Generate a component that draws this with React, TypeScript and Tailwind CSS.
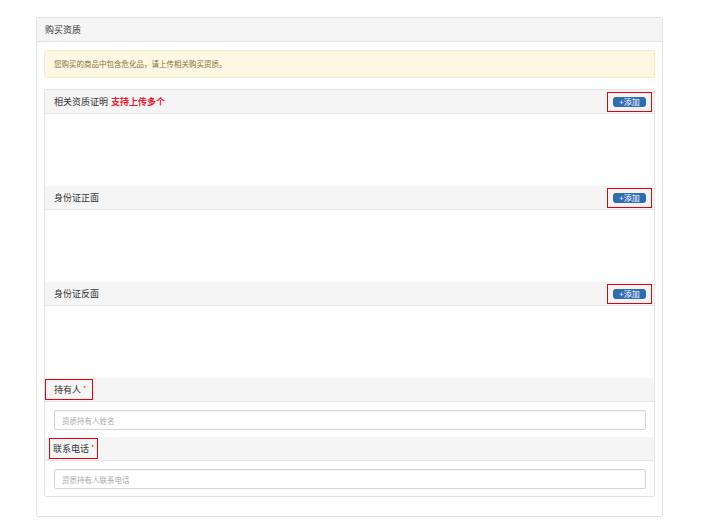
import React from 'react';

const font = { fontFamily: '"Microsoft YaHei", "Noto Sans CJK SC", "Noto Sans", sans-serif' };

function AddButton() {
  return (
    <span className="border border-solid border-red-600 px-[5px] py-[4px] mr-[2px] flex items-center">
      <button className="bg-[#2f6db5] text-white text-[8px] leading-none h-[10px] w-[33px] rounded-[3px] flex items-center justify-center">
        +添加
      </button>
    </span>
  );
}

function UploadSection({ title, extra }: { title: string; extra?: string }) {
  return (
    <div className="flex flex-col">
      <div className="h-[24px] bg-[#f5f5f5] border-b border-[#e6e6e6] flex items-center justify-between pl-[9px]">
        <span className="text-[9px] text-[#333]">
          {title}
          {extra && <span className="text-[#f0142d] font-bold ml-[3px]">{extra}</span>}
        </span>
        <AddButton />
      </div>
      <div className="h-[72px] bg-white" />
    </div>
  );
}

function FieldSection({ label, placeholder, offset }: { label: string; placeholder: string; offset: string }) {
  return (
    <div className="flex flex-col">
      <div className="h-[24px] bg-[#f5f5f5] border-b border-[#e6e6e6] flex items-center">
        <span className={`border border-solid border-red-600 h-[21px] flex items-center text-[9px] text-[#333] ${offset}`}>
          {label}
          <span className="text-[#f0142d] text-[7px] ml-[2px] -mt-[3px]">*</span>
        </span>
      </div>
      <div className="pt-[8px] pb-[7px] pl-[9px] pr-[8px]">
        <input
          className="block w-full h-[20px] border border-[#d5d5d5] rounded-[2px] px-[7px] text-[7.5px] placeholder:text-[#aaa] shadow-[inset_0_1px_1px_rgba(0,0,0,0.05)] outline-none"
          placeholder={placeholder}
        />
      </div>
    </div>
  );
}

export default function App() {
  return (
    <div className="w-[704px] h-[531px] bg-white pt-[17px] pl-[36px]" style={font}>
      <div className="w-[627px] border border-[#e3e3e3] rounded-[2px] flex flex-col pb-[19px]">
        <div className="h-[24px] bg-[#f5f5f5] border-b border-[#e3e3e3] flex items-center pl-[8px] text-[9px] text-[#333]">
          购买资质
        </div>
        <div className="px-[7px] pt-[8px] flex flex-col">
          <div className="h-[28px] bg-[#fcf8e3] border border-[#f6ecc9] rounded-[2px] flex items-center pl-[9px] text-[7.5px] text-[#8a6d3b]">
            您购买的商品中包含危化品，请上传相关购买资质。
          </div>
          <div className="mt-[11px] border border-[#e3e3e3] rounded-[2px] flex flex-col">
            <UploadSection title="相关资质证明" extra="支持上传多个" />
            <UploadSection title="身份证正面" />
            <UploadSection title="身份证反面" />
            <FieldSection label="持有人" placeholder="资质持有人姓名" offset="pl-[8px] pr-[6px]" />
            <FieldSection label="联系电话" placeholder="资质持有人联系电话" offset="ml-[4px] pl-[3px] pr-[3px]" />
          </div>
        </div>
      </div>
    </div>
  );
}
